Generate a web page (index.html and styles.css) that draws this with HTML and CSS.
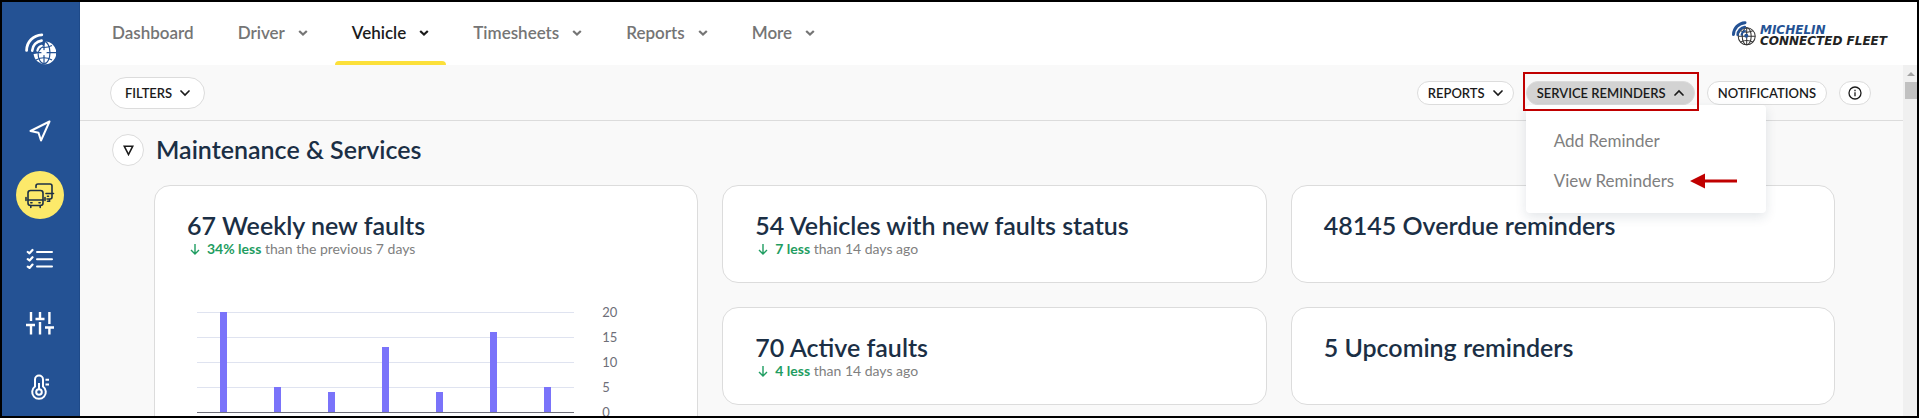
FILE: index.html
```html
<!DOCTYPE html>
<html lang="en">
<head>
<meta charset="utf-8">
<title>Vehicle - Maintenance &amp; Services</title>
<link rel="stylesheet" href="styles.css">
</head>
<body>
<svg class="defs" aria-hidden="true">
  <symbol id="chev-bold" viewBox="0 0 10 8"><path d="M1.2 2 5 5.6 8.8 2" fill="none" stroke="currentColor" stroke-width="2.2"/></symbol>
  <symbol id="chev" viewBox="0 0 10 8"><path d="M1 2 5 6 9 2" fill="none" stroke="currentColor" stroke-width="1.7" stroke-linecap="round"/></symbol>
  <symbol id="down" viewBox="0 0 10 12"><path d="M5 1V11M1 7 5 11 9 7" fill="none" stroke="currentColor" stroke-width="1.4"/></symbol>
  <symbol id="arcs" viewBox="0 0 31 32">
    <g fill="none" stroke="currentColor" stroke-linecap="round">
      <path d="M1.6 17.4A15.8 15.8 0 0 1 16.8 1.8" stroke-width="2.8"/>
      <path d="M7.2 17.6A10.6 10.6 0 0 1 16.6 7.6" stroke-width="2.6"/>
      <path d="M12.4 17.6A6 6 0 0 1 16.8 12.8" stroke-width="2.2"/>
    </g>
  </symbol>
</svg>
<div class="frame">
  <nav class="rail" aria-label="Sections">
    <a class="rail-logo" href="#" aria-label="Home">
      <svg width="31" height="32" viewBox="0 0 31 32">
        <path d="M20 8.4A11.4 11.4 0 1 1 8.6 21C11 21 14 20 15 17.500 C17 14 20 13 20 8.400Z" fill="#fff"/>
        <g fill="none" stroke="#245294" stroke-width="1.2">
          <path d="M19 8V31M8 19.600H31"/><ellipse cx="19" cy="19.600" rx="6" ry="11.200"/>
          <path d="M11 12.500Q19 16.500 27 12.500M11 27Q19 22.500 27 27"/>
        </g>
        <circle cx="19" cy="19.600" r="2.600" fill="#fff"/>
        <use href="#arcs" width="31" height="32" color="#fff"/>
      </svg>
    </a>
    <a class="rail-item" href="#" aria-label="Live map">
      <svg width="22" height="22" viewBox="0 0 22 22" fill="none" stroke="#fff" stroke-width="2" stroke-linejoin="round"><path d="M20.500 1.500 1.500 11 9.500 12.800 12 20.500Z"/></svg>
    </a>
    <a class="rail-item active" href="#" aria-label="Vehicles">
      <svg width="30" height="27" viewBox="0 0 30 27" fill="none" stroke="#1d3045" stroke-width="1.600" stroke-linecap="round">
        <rect x="3" y="8.500" width="15" height="15" rx="2.500"/><path d="M3 18H18M1 15.500V18.500M20 15.500V18.500M5.800 23.500V25.500M15.200 23.500V25.500M5.800 20.800H7M14 20.800H15.200"/>
        <path d="M11 5.500V4Q11 2 13 2H25Q27 2 27 4V15Q27 17 25 17H22M21 11.500H28.500M24.500 17V19.200H22.500M22.500 14.300H23.500"/>
      </svg>
    </a>
    <a class="rail-item" href="#" aria-label="Tasks">
      <svg width="28" height="22" viewBox="0 0 28 22" fill="none" stroke="#fff" stroke-width="2" stroke-linecap="round" stroke-linejoin="round"><path d="M11 4H26M11 11.200H26M11 18.600H26"/><path stroke-width="2.200" d="M1.800 4 3.500 5.300 6.500 2M1.800 11.200 3.500 12.500 6.500 9.200M1.800 18.600 3.500 19.900 6.500 16.600"/></svg>
    </a>
    <a class="rail-item" href="#" aria-label="Settings">
      <svg width="28" height="24" viewBox="0 0 28 24" fill="none" stroke="#fff" stroke-width="2.400"><path d="M5 1V10M0 14H9M5 14V23.500M14 1V8M9.500 8H18.500M14 11V23.500M23.400 1V13M19 16.500H28M23.400 16.500V23.500"/></svg>
    </a>
    <a class="rail-item" href="#" aria-label="Temperature">
      <svg width="20" height="26" viewBox="0 0 20 26" fill="none" stroke="#fff" stroke-width="2"><path d="M5 12.500V5.500A4 4 0 0 1 13 5.500V12.500A6.800 6.800 0 1 1 5 12.500Z"/><circle cx="9" cy="18" r="2.800"/><path d="M9 9V15M15.500 5.700H19M15.500 10.500H19"/></svg>
    </a>
  </nav>
  <div class="page">
    <header class="top">
      <nav class="menu" aria-label="Main">
        <a href="#">Dashboard</a>
        <a href="#">Driver <svg class="chev"><use href="#chev-bold"/></svg></a>
        <a href="#" class="current" aria-current="page">Vehicle <svg class="chev"><use href="#chev-bold"/></svg></a>
        <a href="#">Timesheets <svg class="chev"><use href="#chev-bold"/></svg></a>
        <a href="#">Reports <svg class="chev"><use href="#chev-bold"/></svg></a>
        <a href="#">More <svg class="chev"><use href="#chev-bold"/></svg></a>
      </nav>
      <a class="brand" href="#">
        <svg width="24" height="25" viewBox="0 0 31 32">
          <g fill="none" stroke="#333" stroke-width="1.300">
            <circle cx="19" cy="19.600" r="11"/><path d="M19 8.500V31M8 19.600H30"/><ellipse cx="19" cy="19.600" rx="5.800" ry="11"/><path d="M11 12.500Q19 16 27 12.500M11 27Q19 23 27 27"/>
          </g>
          <circle cx="18.500" cy="19" r="2.600" fill="#245294"/>
          <g fill="none" stroke="#245294" stroke-linecap="round">
            <path d="M1.900 17.400A15.800 15.800 0 0 1 16.800 2" stroke-width="3.800"/>
            <path d="M7.200 17.600A10.600 10.600 0 0 1 16.600 7.600" stroke-width="3.200"/>
            <path d="M12.400 17.600A6 6 0 0 1 16.800 12.800" stroke-width="2.600"/>
          </g>
        </svg>
        <span class="brand-text"><span class="brand-name">MICHELIN</span><span>CONNECTED FLEET</span></span>
      </a>
    </header>
    <div class="below">
      <main class="content">
        <div class="toolbar">
          <button class="pill large" type="button">FILTERS <svg class="chev"><use href="#chev"/></svg></button>
          <div class="actions">
            <button class="pill" type="button">REPORTS <svg class="chev"><use href="#chev"/></svg></button>
            <div class="dropdown">
              <button class="pill open" type="button" aria-expanded="true">SERVICE REMINDERS <svg class="chev up"><use href="#chev"/></svg></button>
              <div class="highlight"></div>
              <div class="dropdown-menu">
                <a href="#">Add Reminder</a>
                <a href="#">View Reminders
                  <svg width="48" height="16" viewBox="0 0 48 16"><path d="M0 8 15 .5V6.500H47V9.500H15V15.500Z" fill="#c00000"/></svg></a>
              </div>
            </div>
            <button class="pill" type="button">NOTIFICATIONS</button>
            <button class="pill info" type="button" aria-label="Information">
              <svg width="14" height="14" viewBox="0 0 14 14" fill="none" stroke="#1b1b1b" stroke-width="1.300"><circle cx="7" cy="7" r="6"/><path d="M7 6.200V10.200M7 3.800V5.200"/></svg>
            </button>
          </div>
        </div>
        <section>
          <div class="section-head">
            <button class="round" type="button" aria-label="Collapse section">
              <svg width="11" height="11" viewBox="0 0 11 11"><path d="M1.200 1.200H9.800L5.500 9.500Z" fill="none" stroke="#1b1b1b" stroke-width="1.600"/></svg>
            </button>
            <h1>Maintenance &amp; Services</h1>
          </div>
          <div class="cards">
            <article class="card tall">
              <h2>67 Weekly new faults</h2>
              <p><svg class="down"><use href="#down"/></svg><span><b>34% less</b> than the previous 7 days</span></p>
              <div class="chart">
                <div class="plot">
                  <i style="height:100%"></i><i style="height:25%"></i><i style="height:20%"></i><i style="height:65%"></i><i style="height:20%"></i><i style="height:80%"></i><i style="height:25%"></i>
                </div>
                <div class="axis"><span>20</span><span>15</span><span>10</span><span>5</span><span>0</span></div>
              </div>
            </article>
            <article class="card">
              <h2>54 Vehicles with new faults status</h2>
              <p><svg class="down"><use href="#down"/></svg><span><b>7 less</b> than 14 days ago</span></p>
            </article>
            <article class="card"><h2>48145 Overdue reminders</h2></article>
            <article class="card">
              <h2>70 Active faults</h2>
              <p><svg class="down"><use href="#down"/></svg><span><b>4 less</b> than 14 days ago</span></p>
            </article>
            <article class="card"><h2>5 Upcoming reminders</h2></article>
          </div>
        </section>
      </main>
      <div class="scrollbar" aria-hidden="true">
        <svg width="8" height="4" viewBox="0 0 8 4"><path d="M0 4 4 0 8 4Z" fill="#a3a3a3"/></svg>
        <div class="thumb"></div>
      </div>
    </div>
  </div>
</div>
</body>
</html>
```
FILE: styles.css
```css
* { box-sizing: border-box; }
body { margin: 0; font-family: Lato, "Open Sans", sans-serif; color: #1b1b1b; }
a { color: inherit; text-decoration: none; }
button { font: inherit; color: inherit; cursor: pointer; }
h1, h2, p { margin: 0; }
svg { display: block; flex: none; }
.defs { position: absolute; width: 0; height: 0; }

.frame { display: flex; height: 100vh; overflow: hidden; border: 2px solid #000; background: #f9f9f9; }

.rail { flex: none; width: 78px; padding-right: 1px; background: #245294; display: flex; flex-direction: column; align-items: center; gap: 16px; border-right: 1px solid #1e4a89; }
.rail-logo { padding: 31px 0 26px; }
.rail-item { flex: none; width: 48px; height: 48px; border-radius: 50%; display: flex; align-items: center; justify-content: center; }
.rail-item.active { background: #fce96a; }

.page { flex: 1; min-width: 0; display: flex; flex-direction: column; }
.top { flex: none; height: 63px; background: #fff; display: flex; justify-content: space-between; padding: 0 30px 0 15px; }
.menu { display: flex; gap: 10px; font-size: 17px; font-weight: 600; color: #757575; }
.menu a { display: flex; align-items: center; gap: 13px; padding: 2px 17px 0; border-bottom: 4px solid transparent; }
.menu .current { color: #1b1b1b; position: relative; }
.menu .current::after { content: ""; position: absolute; left: 0; right: 0; bottom: -4px; height: 4px; background: #fce03a; border-radius: 4px 4px 0 0; }
.chev { width: 10px; height: 8px; }
.up { transform: rotate(180deg); }

.brand { display: flex; align-items: center; gap: 4px; }
.brand-text { display: flex; flex-direction: column; padding-top: 4px; font: italic bold 12px/11px "DejaVu Sans", sans-serif; color: #222; }
.brand-name { color: #245294; }

.below { flex: 1; min-height: 0; display: flex; }
.content { flex: 1; min-width: 0; }
.scrollbar { flex: none; width: 14px; background: #f0f0f0; padding: 7px 0 0 2px; display: flex; flex-direction: column; align-items: center; gap: 6px; }
.thumb { width: 12px; height: 17px; background: #c1c1c1; }

.toolbar { height: 56px; padding: 0 32px 0 30px; border-bottom: 1px solid #dcdcdc; display: flex; align-items: center; justify-content: space-between; }
.actions { display: flex; gap: 12px; }
.pill { height: 24px; padding: 0 10px; border: 1px solid #dcdcdc; border-radius: 16px; background: #fff; font-size: 13px; font-weight: 600; display: flex; align-items: center; gap: 8px; white-space: nowrap; }
.pill.large { height: 32px; padding: 0 14px; }
.pill.open { background: #d3d3d3; }
.pill.info { width: 32px; padding: 0; justify-content: center; }
.dropdown { position: relative; }
.dropdown-menu { position: absolute; z-index: 1; top: 24px; left: 0; width: 240px; padding: 16px 0 12px; background: #fff; border-radius: 4px; box-shadow: 0 4px 12px rgba(27, 48, 75, .12); font-size: 17px; color: #808080; }
.dropdown-menu a { height: 40px; padding-left: 28px; display: flex; align-items: center; gap: 16px; }
.highlight { position: absolute; z-index: 2; inset: -9px -4px -6px -3px; border: 2px solid #c00000; pointer-events: none; }

.section-head { display: flex; align-items: center; gap: 12px; padding: 13px 32px 19px; }
.round { width: 32px; height: 32px; padding: 0; border: 1px solid #dcdcdc; border-radius: 50%; background: #fff; display: flex; align-items: center; justify-content: center; }
h1, h2 { font-size: 25px; line-height: 28px; font-weight: 600; color: #1b2f45; }
h1 { padding-bottom: 2px; }
.cards { display: grid; grid-template-columns: repeat(3, 1fr); grid-template-rows: 98px 98px; gap: 24px; padding: 0 68px 0 74px; }
.card { background: #fff; border: 1px solid #dcdcdc; border-radius: 16px; padding: 25px 32px; }
.card.tall { grid-row: span 3; height: 320px; }
.card p { display: flex; align-items: center; gap: 7px; padding-left: 3px; font-size: 14px; line-height: 20px; color: #808080; }
.card b { font-weight: 700; color: #1f9d61; }
.down { width: 10px; height: 12px; color: #1f9d61; }

.chart { display: flex; gap: 28px; padding: 53px 15px 0 10px; }
.plot { flex: 1; height: 101px; display: flex; align-items: flex-end; border-bottom: 1px solid #6e6e78; background: repeating-linear-gradient(#dfe3f0 0 1px, transparent 1px 25px); }
.plot i { flex: 1; background: linear-gradient(#7a73fa, #7a73fa) center / 7px 100% no-repeat; }
.axis { width: 48px; margin-top: -12px; font-size: 13px; line-height: 25px; color: #6e6e78; display: flex; flex-direction: column; }
```
